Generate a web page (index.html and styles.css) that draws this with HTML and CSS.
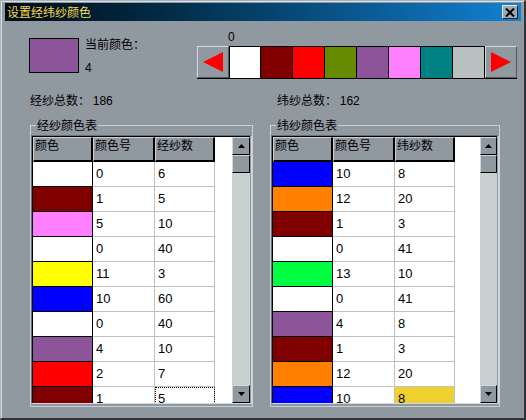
FILE: index.html
```html
<!DOCTYPE html>
<html>
<head>
<meta charset="utf-8">
<link rel="stylesheet" href="styles.css">
</head>
<body>
<div class="window">
  <div class="titlebar">
    <span class="title">设置经纬纱颜色</span>
    <span class="close"><svg width="10" height="9" viewBox="0 0 10 9"><path d="M1 0.5 L9 8.5 M9 0.5 L1 8.5" stroke="#000" stroke-width="2"/></svg></span>
  </div>
  <div class="top">
    <div class="current">
      <div class="cur-swatch"></div>
      <div class="cur-info">
        <div class="cur-label">当前颜色：</div>
        <div class="cur-num">4</div>
      </div>
    </div>
    <div class="palette-block">
      <div class="pal-index">0</div>
      <div class="palette">
        <div class="pal-btn"><svg width="20" height="20" viewBox="0 0 20 20"><polygon points="0,10 20,0 20,20" fill="#ff0000"/></svg></div>
        <div class="pal-swatch first bg-white"></div>
        <div class="pal-swatch bg-maroon"></div>
        <div class="pal-swatch bg-red"></div>
        <div class="pal-swatch bg-olive"></div>
        <div class="pal-swatch bg-purple"></div>
        <div class="pal-swatch bg-pink"></div>
        <div class="pal-swatch bg-teal"></div>
        <div class="pal-swatch bg-silver"></div>
        <div class="pal-btn"><svg width="20" height="20" viewBox="0 0 20 20"><polygon points="20,10 0,0 0,20" fill="#ff0000"/></svg></div>
      </div>
    </div>
  </div>
  <div class="totals">
    <div class="tot-left">经纱总数： <span class="num">186</span></div>
    <div class="tot-right">纬纱总数： <span class="num">162</span></div>
  </div>
  <div class="groups">
    <fieldset class="group group-left">
      <legend>经纱颜色表</legend>
      <div class="grid">
        <div class="cells">
          <div class="row head"><div class="hc c1">颜色</div><div class="hc c2">颜色号</div><div class="hc c3">经纱数</div></div>
          <div class="row"><div class="cc bg-white"></div><div class="dc c2">0</div><div class="dc c3">6</div></div>
          <div class="row"><div class="cc bg-maroon"></div><div class="dc c2">1</div><div class="dc c3">5</div></div>
          <div class="row"><div class="cc bg-pink"></div><div class="dc c2">5</div><div class="dc c3">10</div></div>
          <div class="row"><div class="cc bg-white"></div><div class="dc c2">0</div><div class="dc c3">40</div></div>
          <div class="row"><div class="cc bg-yellow"></div><div class="dc c2">11</div><div class="dc c3">3</div></div>
          <div class="row"><div class="cc bg-blue"></div><div class="dc c2">10</div><div class="dc c3">60</div></div>
          <div class="row"><div class="cc bg-white"></div><div class="dc c2">0</div><div class="dc c3">40</div></div>
          <div class="row"><div class="cc bg-purple"></div><div class="dc c2">4</div><div class="dc c3">10</div></div>
          <div class="row"><div class="cc bg-red"></div><div class="dc c2">2</div><div class="dc c3">7</div></div>
          <div class="row"><div class="cc bg-maroon"></div><div class="dc c2">1</div><div class="dc c3 focus">5</div></div>
        </div>
        <div class="vscroll w18">
          <div class="sbtn"><svg width="7" height="4" viewBox="0 0 7 4"><polygon points="3.5,0 7,4 0,4" fill="#000"/></svg></div>
          <div class="sbtn thumb"></div>
          <div class="track"></div>
          <div class="sbtn"><svg width="7" height="4" viewBox="0 0 7 4"><polygon points="0,0 7,0 3.5,4" fill="#000"/></svg></div>
        </div>
      </div>
    </fieldset>
    <fieldset class="group group-right">
      <legend>纬纱颜色表</legend>
      <div class="grid">
        <div class="cells wide">
          <div class="row head"><div class="hc c1">颜色</div><div class="hc c2">颜色号</div><div class="hc c3">纬纱数</div></div>
          <div class="row"><div class="cc bg-blue"></div><div class="dc c2">10</div><div class="dc c3">8</div></div>
          <div class="row"><div class="cc bg-orange"></div><div class="dc c2">12</div><div class="dc c3">20</div></div>
          <div class="row"><div class="cc bg-maroon"></div><div class="dc c2">1</div><div class="dc c3">3</div></div>
          <div class="row"><div class="cc bg-white"></div><div class="dc c2">0</div><div class="dc c3">41</div></div>
          <div class="row"><div class="cc bg-green"></div><div class="dc c2">13</div><div class="dc c3">10</div></div>
          <div class="row"><div class="cc bg-white"></div><div class="dc c2">0</div><div class="dc c3">41</div></div>
          <div class="row"><div class="cc bg-purple"></div><div class="dc c2">4</div><div class="dc c3">8</div></div>
          <div class="row"><div class="cc bg-maroon"></div><div class="dc c2">1</div><div class="dc c3">3</div></div>
          <div class="row"><div class="cc bg-orange"></div><div class="dc c2">12</div><div class="dc c3">20</div></div>
          <div class="row"><div class="cc bg-blue"></div><div class="dc c2">10</div><div class="dc c3 selected">8</div></div>
        </div>
        <div class="vscroll w17">
          <div class="sbtn"><svg width="7" height="4" viewBox="0 0 7 4"><polygon points="3.5,0 7,4 0,4" fill="#000"/></svg></div>
          <div class="sbtn thumb"></div>
          <div class="track"></div>
          <div class="sbtn"><svg width="7" height="4" viewBox="0 0 7 4"><polygon points="0,0 7,0 3.5,4" fill="#000"/></svg></div>
        </div>
      </div>
    </fieldset>
  </div>
</div>
</body>
</html>
```
FILE: styles.css
```css
* { box-sizing: border-box; }
html, body { margin: 0; padding: 0; }
body {
  width: 526px;
  height: 420px;
  overflow: hidden;
  background: #9098a0;
  font-family: "Noto Sans CJK SC", "Liberation Sans", sans-serif;
  font-size: 12px;
  color: #000;
}
.window {
  width: 526px;
  height: 420px;
  overflow: hidden;
  background: #9098a0;
  border-top: 1px solid #a8b0b8;
  border-left: 1px solid #a8b0b8;
  border-right: 2px solid #303438;
  border-bottom: 2px solid #303438;
  box-shadow: inset 1px 1px 0 #d8e0e8;
  padding: 2px 3px 0 4px;
}
.titlebar {
  height: 18px;
  width: 516px;
  background: linear-gradient(to right, #000a14 0%, #03304e 35%, #0a5a94 70%, #1282d2 100%);
  display: flex;
  align-items: center;
  justify-content: space-between;
  padding: 0 3px 0 2px;
}
.title {
  color: #f8d850;
  font-size: 12px;
  line-height: 14px;
}
.close {
  width: 16px;
  height: 14px;
  background: #a0a8b0;
  border-top: 1px solid #e0e8f0;
  border-left: 1px solid #e0e8f0;
  border-right: 1px solid #202428;
  border-bottom: 1px solid #202428;
  display: flex;
  align-items: center;
  justify-content: center;
}
.close svg { display: block; }

.top {
  display: flex;
  height: 69px;
}
.current {
  display: flex;
  margin: 17px 0 0 24px;
  width: 168px;
}
.cur-swatch {
  width: 50px;
  height: 35px;
  background: #8c5499;
  border: 1px solid #000;
}
.cur-info { margin-left: 6px; margin-top: -1px; }
.cur-label { line-height: 14px; }
.cur-num {
  margin-top: 10px;
  line-height: 14px;
  font-family: "Liberation Sans", sans-serif;
  font-size: 12px;
}
.palette-block { margin-top: 7px; }
.pal-index {
  height: 18px;
  line-height: 18px;
  padding-left: 31px;
  font-family: "Liberation Sans", sans-serif;
  font-size: 12px;
}
.palette {
  display: flex;
  width: 320px;
  height: 33px;
  border-bottom: 1px solid #000;
}
.pal-btn {
  width: 32px;
  height: 32px;
  background: #9098a0;
  border-top: 1px solid #d0d8e0;
  border-left: 1px solid #d0d8e0;
  border-right: 1px solid #50585f;
  border-bottom: 1px solid #50585f;
  display: flex;
  align-items: center;
  justify-content: center;
}
.pal-btn svg { display: block; }
.pal-swatch {
  width: 32px;
  height: 32px;
  border-top: 1px solid #000;
  border-right: 1px solid #000;
}
.pal-swatch.first { border-left: 1px solid #000; width: 32px; }

.bg-white { background: #ffffff; }
.bg-maroon { background: #800000; }
.bg-red { background: #ff0000; }
.bg-olive { background: #678b00; }
.bg-purple { background: #8c5499; }
.bg-pink { background: #ff80ff; }
.bg-teal { background: #008080; }
.bg-silver { background: #b8c0c0; }
.bg-yellow { background: #ffff00; }
.bg-blue { background: #0000ff; }
.bg-orange { background: #ff8000; }
.bg-green { background: #00ff40; }

.totals {
  display: flex;
  height: 20px;
  line-height: 20px;
}
.tot-left { width: 272px; padding-left: 25px; }
.num { font-family: "Liberation Sans", sans-serif; font-size: 12px; }

.groups {
  display: flex;
  margin-top: 7px;
  padding-left: 25px;
  gap: 17px;
}
fieldset.group {
  margin: 0;
  padding: 0 0 2px 0;
  border: 1px solid #c8d0d8;
  min-width: 0;
}
.group-left { width: 223px; }
.group-right { width: 230px; }
legend {
  padding: 0 1px;
  margin-left: 5px;
  line-height: 16px;
  font-size: 12px;
}
.grid {
  margin-top: 2px;
  display: flex;
  border-top: 1px solid #687078;
  border-left: 1px solid #687078;
  border-right: 1px solid #d0d8e0;
  border-bottom: 1px solid #d0d8e0;
}
.cells {
  width: 200px;
  height: 267px;
  overflow: hidden;
  background: #fff;
  border-top: 1px solid #000;
  border-left: 1px solid #000;
}
.cells.wide { width: 208px; }
.row {
  display: flex;
  height: 25px;
}
.c1 { width: 60px; }
.c2 { width: 62px; }
.c3 { width: 60px; }
.hc {
  height: 25px;
  background: #9098a0;
  border-top: 1px solid #c8d0d8;
  border-left: 1px solid #c8d0d8;
  border-right: 2px solid #000;
  border-bottom: 2px solid #000;
  padding-left: 1px;
  line-height: 14px;
  font-size: 12px;
}
.cc {
  width: 60px;
  height: 25px;
  border-right: 1px solid #000;
  border-bottom: 1px solid #000;
}
.dc {
  height: 25px;
  background: #fff;
  border-right: 1px solid #c0c0c0;
  border-bottom: 1px solid #c0c0c0;
  padding-left: 3px;
  font-family: "Liberation Sans", sans-serif;
  font-size: 13px;
  line-height: 24px;
}
.dc.focus {
  outline: 1px dotted #000;
  outline-offset: -1px;
}
.dc.selected { background: #f0d030; }

.vscroll {
  display: flex;
  flex-direction: column;
  height: 267px;
  background: #c8d0d0;
  border-top: 1px solid #000;
}
.vscroll.w18 { width: 18px; }
.vscroll.w17 { width: 17px; }
.sbtn {
  height: 18px;
  flex: none;
  background: #9098a0;
  border-top: 1px solid #d0d8e0;
  border-left: 1px solid #d0d8e0;
  border-right: 1px solid #000;
  border-bottom: 1px solid #000;
  display: flex;
  align-items: center;
  justify-content: center;
}
.sbtn svg { display: block; }
.track { flex: 1; }
```
